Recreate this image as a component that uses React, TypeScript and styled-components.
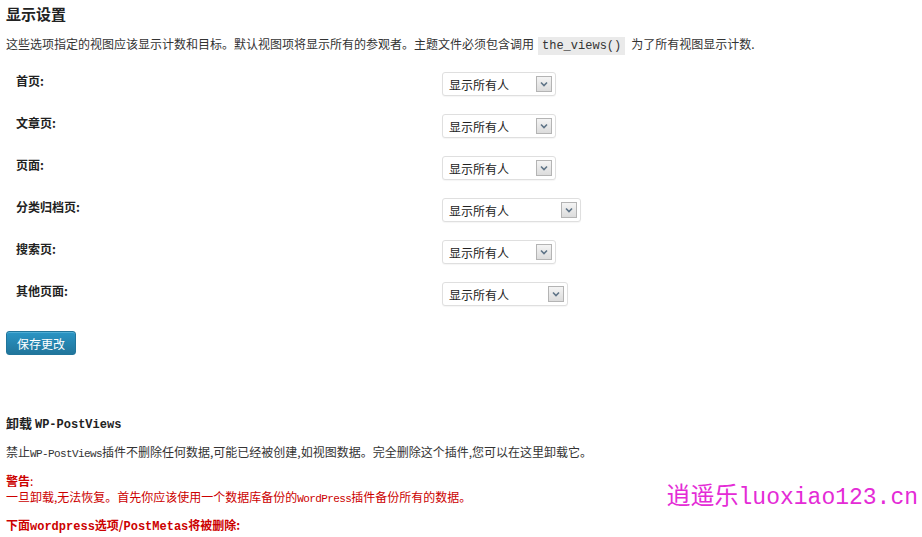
import styled, { createGlobalStyle } from 'styled-components';

const GlobalStyle = createGlobalStyle`
  html, body {
    margin: 0;
    padding: 0;
    background: #fff;
    overflow: hidden;
  }
  body {
    font-family: "Noto Sans CJK SC", "Liberation Sans", sans-serif;
    font-size: 12px;
    color: #333;
  }
`;

const CJK = '"Noto Sans CJK SC", "Liberation Sans", sans-serif';
const MONO = '"Liberation Mono", "Noto Sans CJK SC", monospace';

type Row = { label: string; width: number };

const rows: Row[] = [
  { label: '首页:', width: 114 },
  { label: '文章页:', width: 114 },
  { label: '页面:', width: 114 },
  { label: '分类归档页:', width: 139 },
  { label: '搜索页:', width: 114 },
  { label: '其他页面:', width: 126 },
];

function Chevron() {
  return (
    <svg width="8" height="6" viewBox="0 0 8 6">
      <polyline points="1,1.5 4,4.5 7,1.5" fill="none" stroke="#5f7487" strokeWidth="1.6" />
    </svg>
  );
}

export default function App() {
  return (
    <>
      <GlobalStyle />
      <S.Page>
        {/* 显示设置 */}
        <S.Title>显示设置</S.Title>
        <S.Desc>
          这些选项指定的视图应该显示计数和目标。默认视图项将显示所有的参观者。主题文件必须包含调用
          <S.Code>the_views()</S.Code>
          为了所有视图显示计数.
        </S.Desc>
        <S.Table>
          {rows.map((r) => (
            <S.Row key={r.label}>
              <S.Label>{r.label}</S.Label>
              <S.Cell>
                <S.Select $width={r.width}>
                  <span>显示所有人</span>
                  <S.Arrow>
                    <Chevron />
                  </S.Arrow>
                </S.Select>
              </S.Cell>
            </S.Row>
          ))}
        </S.Table>
        <S.Button>保存更改</S.Button>

        {/* 卸载 */}
        <S.SubTitle>
          卸载 <S.Mono>WP-PostViews</S.Mono>
        </S.SubTitle>
        <S.Text $top={12}>
          禁止<S.MonoThin>WP-PostViews</S.MonoThin>插件不删除任何数据,可能已经被创建,如视图数据。完全删除这个插件,您可以在这里卸载它。
        </S.Text>
        <S.Warn $top={13}>
          <strong>警告</strong>:
          <br />
          一旦卸载,无法恢复。首先你应该使用一个数据库备份的<S.MonoThin>WordPress</S.MonoThin>插件备份所有的数据。
        </S.Warn>
        <S.WarnBold $top={12}>
          下面<S.Mono>wordpress</S.Mono>选项/<S.Mono>PostMetas</S.Mono>将被删除:
        </S.WarnBold>

        <S.Watermark>
          逍遥乐<S.WatermarkLatin>luoxiao123.cn</S.WatermarkLatin>
        </S.Watermark>
      </S.Page>
    </>
  );
}

const S = {
  Page: styled.div`
    position: relative;
    height: 537px;
    padding: 0 6px;
    box-sizing: border-box;
  `,
  Title: styled.h2`
    margin: 4px 0 0;
    height: 20px;
    font-size: 15px;
    line-height: 20px;
    font-weight: bold;
    color: #222;
  `,
  Desc: styled.p`
    margin: 12px 0 0;
    height: 16px;
    line-height: 16px;
    color: #333;
  `,
  Code: styled.code`
    margin: 0 6px 0 4px;
    padding: 2px 4px;
    background: #eaeaea;
    font-family: ${MONO};
    font-size: 12px;
    line-height: 0;
    color: #333;
  `,
  Table: styled.div`
    margin-top: 10px;
    display: flex;
    flex-direction: column;
  `,
  Row: styled.div`
    display: grid;
    grid-template-columns: 436px 1fr;
    height: 42px;
  `,
  Label: styled.div`
    padding: 10px 0 0 10px;
    line-height: 18px;
    font-weight: bold;
    color: #222;
  `,
  Cell: styled.div`
    padding-top: 10px;
  `,
  Select: styled.div<{ $width: number }>`
    width: ${({ $width }) => $width}px;
    height: 24px;
    box-sizing: border-box;
    display: flex;
    align-items: center;
    justify-content: space-between;
    padding: 0 3px 0 6px;
    border: 1px solid #dfdfdf;
    border-radius: 3px;
    background: #fff;
    box-shadow: 0 1px 1px rgba(0, 0, 0, 0.04);
    color: #222;
    font-size: 12px;
  `,
  Arrow: styled.span`
    width: 16px;
    height: 16px;
    box-sizing: border-box;
    display: flex;
    align-items: center;
    justify-content: center;
    border: 1px solid #b4b4b4;
    background: linear-gradient(#f4f4f4, #dcdcdc);
  `,
  Button: styled.button`
    margin-top: 17px;
    width: 70px;
    height: 24px;
    display: flex;
    align-items: center;
    justify-content: center;
    padding: 0;
    border: 1px solid #21759b;
    border-radius: 3px;
    background: linear-gradient(#2a95c5, #21759b);
    box-shadow: inset 0 1px 0 rgba(120, 200, 230, 0.5);
    color: #fff;
    font-family: ${CJK};
    font-size: 12px;
  `,
  SubTitle: styled.h3`
    margin: 59px 0 0;
    height: 18px;
    font-size: 13px;
    line-height: 18px;
    font-weight: bold;
    color: #222;
  `,
  Mono: styled.span`
    font-family: ${MONO};
    font-weight: bold;
    font-size: 12px;
    line-height: 0;
  `,
  MonoThin: styled.span`
    font-family: ${MONO};
    font-size: 11px;
    line-height: 0;
    letter-spacing: -0.6px;
  `,
  Text: styled.p<{ $top: number }>`
    margin: ${({ $top }) => $top}px 0 0;
    height: 16px;
    line-height: 16px;
    color: #333;
  `,
  Warn: styled.p<{ $top: number }>`
    margin: ${({ $top }) => $top}px 0 0;
    height: 32px;
    line-height: 16px;
    color: #c00;
  `,
  WarnBold: styled.p<{ $top: number }>`
    margin: ${({ $top }) => $top}px 0 0;
    height: 16px;
    line-height: 16px;
    color: #c00;
    font-weight: bold;
  `,
  Watermark: styled.div`
    position: absolute;
    right: 4px;
    top: 475px;
    font-family: ${CJK};
    font-size: 24px;
    line-height: 30px;
    color: #e42bd6;
  `,
  WatermarkLatin: styled.span`
    font-family: "Liberation Mono", monospace;
    font-size: 23px;
  `,
};
